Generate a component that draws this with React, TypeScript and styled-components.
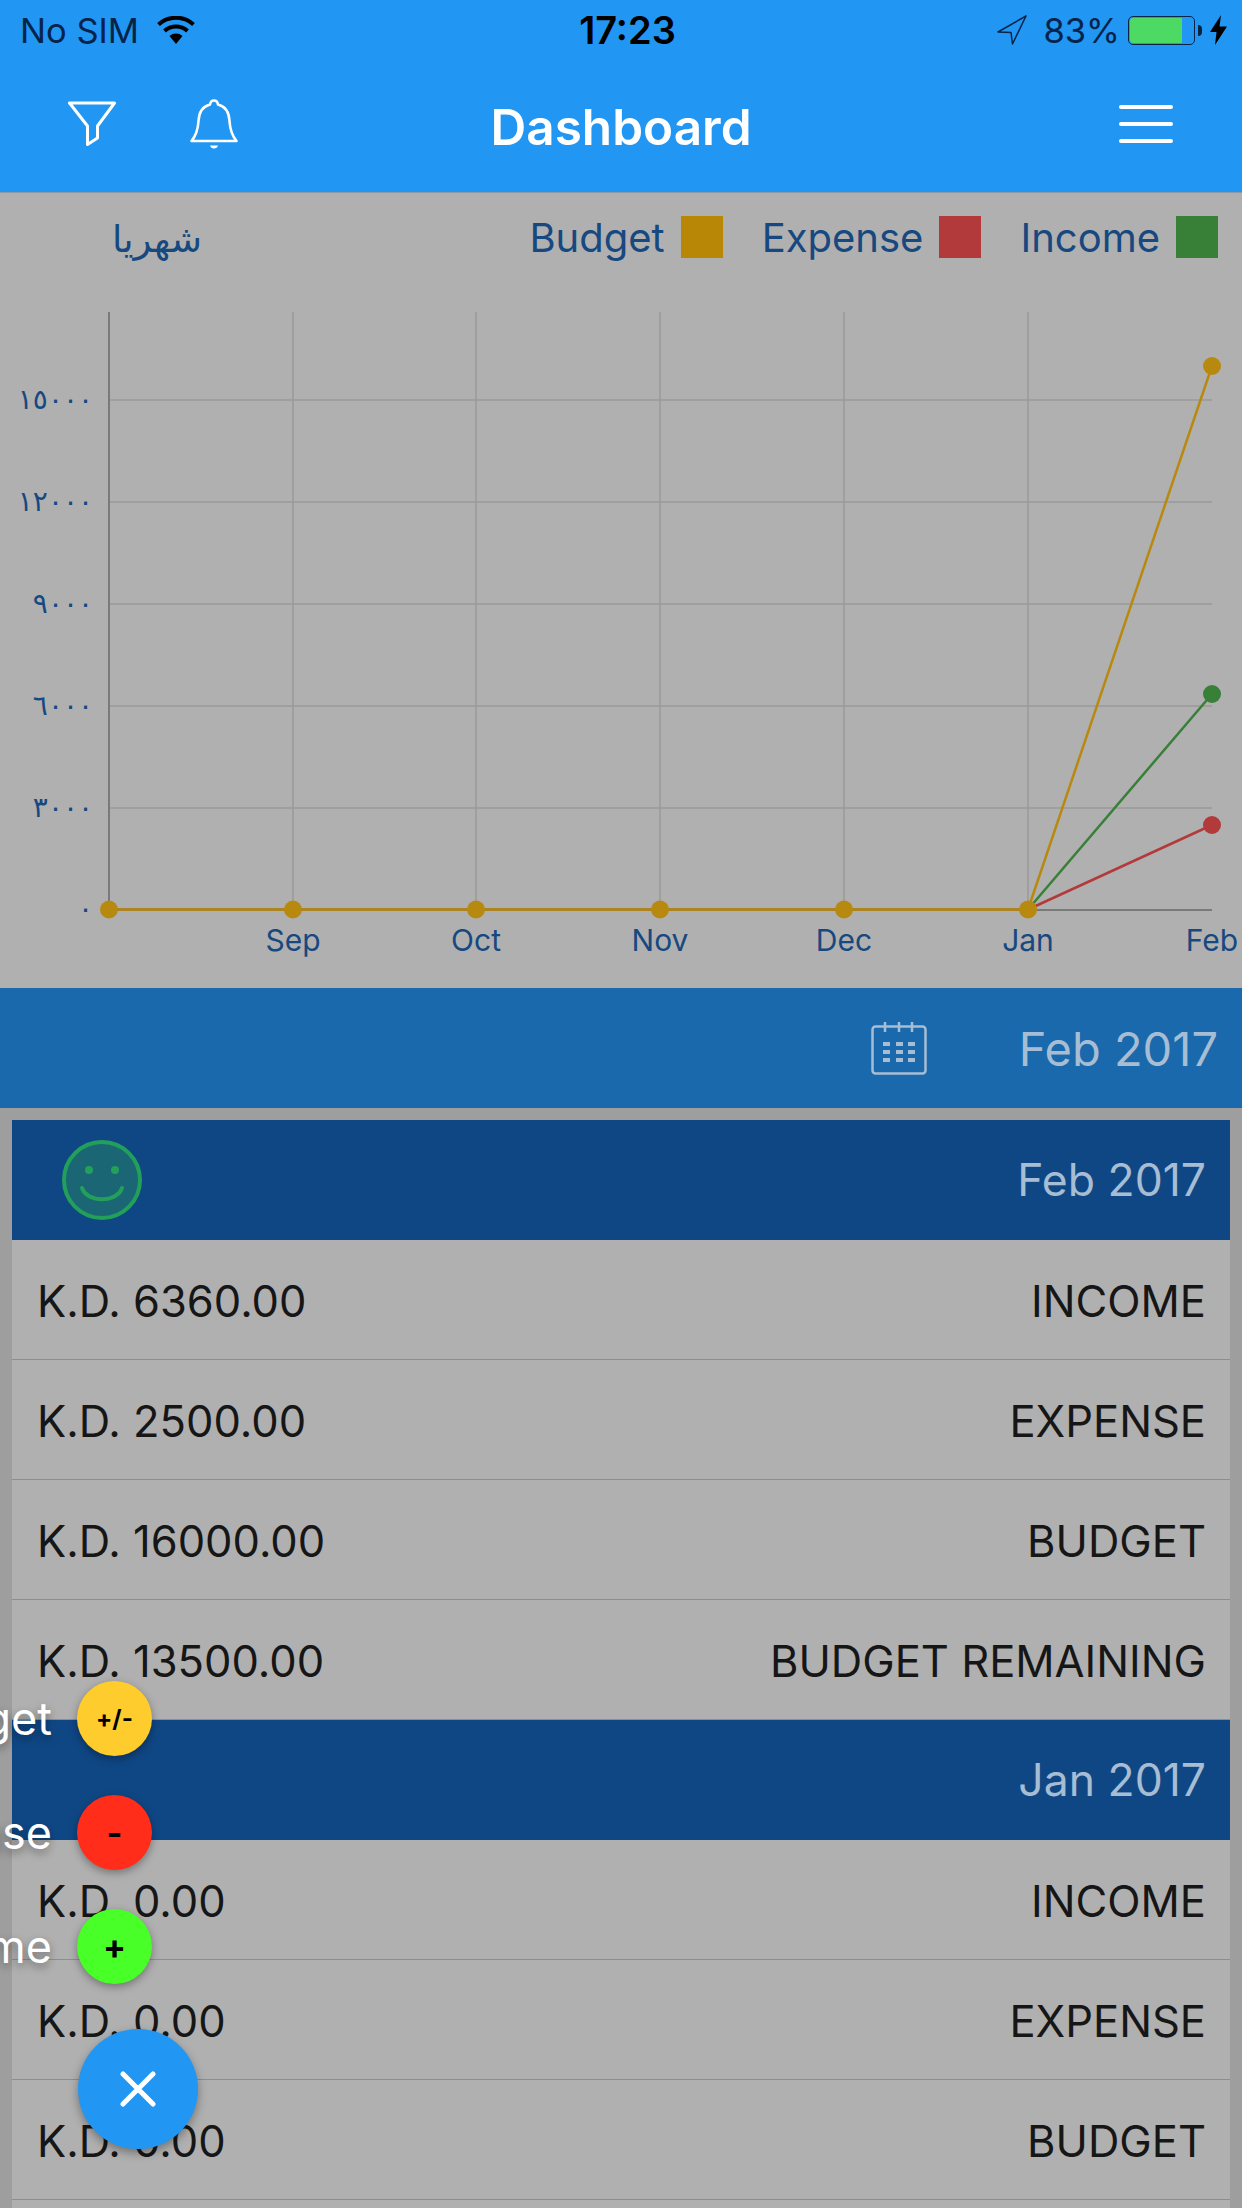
import { FunctionComponent } from 'react';
import styled, { createGlobalStyle } from 'styled-components';

const SANS = `Inter, 'Liberation Sans', sans-serif`;

const GlobalStyle = createGlobalStyle`
  html, body {
    margin: 0;
    padding: 0;
    background: #b0b0b0;
  }
  * {
    box-sizing: border-box;
  }
`;

const MONTHS = [
  { label: '', x: 109 },
  { label: 'Sep', x: 293 },
  { label: 'Oct', x: 476 },
  { label: 'Nov', x: 660 },
  { label: 'Dec', x: 844 },
  { label: 'Jan', x: 1028 },
  { label: 'Feb', x: 1212 },
];

const TICKS = [
  { label: '١٥٠٠٠', y: 400 },
  { label: '١٢٠٠٠', y: 502 },
  { label: '٩٠٠٠', y: 604 },
  { label: '٦٠٠٠', y: 706 },
  { label: '٣٠٠٠', y: 808 },
  { label: '٠', y: 909 },
];

const SERIES = [
  { color: '#b33a3a', y: 825 },
  { color: '#388038', y: 694 },
  { color: '#b8890f', y: 366 },
];

const FilterIcon = () => (
  <svg width="48" height="46" viewBox="0 0 48 46" fill="none" stroke="#fff" strokeWidth="3" strokeLinejoin="round">
    <path d="M1.5 2h45L29.5 25v12l-10 6.500V25z" />
  </svg>
);

const BellIcon = () => (
  <svg width="48" height="50" viewBox="0 0 48 50" fill="none" stroke="#fff" strokeWidth="2.600" strokeLinejoin="round">
    <path d="M1.500 42c5-6 6.500-12 7-20C9 12 14 7 20 5.500 20.500 2 22 1.500 24 1.500S27.500 2 28 5.500C34 7 39 12 39.500 22c.5 8 2 14 7 20z" />
    <path d="M20 46.500h8c-.5 2-2 3-4 3s-3.500-1-4-3z" fill="#fff" stroke="none" />
  </svg>
);

const WifiIcon = () => (
  <svg width="38" height="28" viewBox="0 0 38 28">
    <path d="M19 28l-6.500-8a10 10 0 0 1 13 0z" fill="#000" />
    <path d="M7.500 15a17 17 0 0 1 23 0M1.500 8.500a26 26 0 0 1 35 0" fill="none" stroke="#000" strokeWidth="4" />
  </svg>
);

const LocationIcon = () => (
  <svg width="30" height="30" viewBox="0 0 30 30" fill="none" stroke="#06234a" strokeWidth="1.500" strokeLinejoin="round">
    <path d="M29 1L1 17l13 .5L15.500 29z" />
  </svg>
);

const BoltIcon = () => (
  <svg width="17" height="30" viewBox="0 0 17 30">
    <path d="M11 0L0 17h6.500L5 30l12-18.500H9.500z" fill="#000" />
  </svg>
);

const CalendarIcon = () => (
  <svg width="56" height="54" viewBox="0 0 56 54" fill="none" stroke="#a6bdd3" strokeWidth="2.500">
    <rect x="1.500" y="5.500" width="53" height="47" rx="3" />
    <path d="M14 1v10M28 1v10M41 1v10" />
    <path
      d="M12 21h7v4h-7zM25 21h7v4h-7zM37 21h7v4h-7zM12 29h7v4h-7zM25 29h7v4h-7zM37 29h7v4h-7zM12 37h7v4h-7zM25 37h7v4h-7zM37 37h7v4h-7z"
      fill="#a6bdd3"
      stroke="none"
    />
  </svg>
);

const SmileyIcon = () => (
  <svg width="80" height="80" viewBox="0 0 80 80">
    <circle cx="40" cy="40" r="38" fill="#1a6674" stroke="#22a05a" strokeWidth="4" />
    <circle cx="27" cy="30" r="4" fill="#22a05a" />
    <circle cx="53" cy="30" r="4" fill="#22a05a" />
    <path d="M20 48c5 15 35 15 40 0" fill="none" stroke="#22a05a" strokeWidth="4" strokeLinecap="round" />
  </svg>
);

const Chart = () => (
  <ChartSvg viewBox="0 303 1242 685">
    {MONTHS.slice(1, 6).map((m) => (
      <line key={m.x} x1={m.x} x2={m.x} y1={312} y2={909} stroke="#9a9a9a" strokeWidth="1.500" />
    ))}
    {TICKS.slice(0, 5).map((t) => (
      <line key={t.y} x1={109} x2={1212} y1={t.y} y2={t.y} stroke="#9a9a9a" strokeWidth="1.500" />
    ))}
    <line x1={109} x2={109} y1={312} y2={909} stroke="#7a7a7a" strokeWidth="2" />
    <line x1={109} x2={1212} y1={910} y2={910} stroke="#7a7a7a" strokeWidth="2" />
    {TICKS.map((t) => (
      <YLabel key={t.y} x={93} y={t.y + 9}>
        {t.label}
      </YLabel>
    ))}
    {MONTHS.filter((m) => m.label).map((m) => (
      <XLabel key={m.x} x={m.x} y={951}>
        {m.label}
      </XLabel>
    ))}
    {SERIES.map((s) => (
      <g key={s.color}>
        <line x1={1028} y1={909.5} x2={1212} y2={s.y} stroke={s.color} strokeWidth="2.500" />
        <circle cx={1212} cy={s.y} r={9} fill={s.color} />
      </g>
    ))}
    <line x1={109} x2={1028} y1={909.5} y2={909.5} stroke="#ad8423" strokeWidth="3" />
    {MONTHS.slice(0, 6).map((m) => (
      <circle key={m.x} cx={m.x} cy={909.5} r={9} fill="#b8890f" />
    ))}
  </ChartSvg>
);

const ROW_GROUPS = [
  {
    month: 'Feb 2017',
    smiley: true,
    rows: [
      ['K.D. 6360.00', 'INCOME'],
      ['K.D. 2500.00', 'EXPENSE'],
      ['K.D. 16000.00', 'BUDGET'],
      ['K.D. 13500.00', 'BUDGET REMAINING'],
    ],
  },
  {
    month: 'Jan 2017',
    smiley: false,
    rows: [
      ['K.D. 0.00', 'INCOME'],
      ['K.D. 0.00', 'EXPENSE'],
      ['K.D. 0.00', 'BUDGET'],
    ],
  },
];

const FABS = [
  { label: 'Budget', sign: '+/-', color: '#ffcc2e', size: 24 },
  { label: 'Expense', sign: '-', color: '#ff2d1a', size: 34 },
  { label: 'Income', sign: '+', color: '#48ff28', size: 34 },
];

export const App: FunctionComponent = () => {
  return (
    <Page>
      <GlobalStyle />
      <TopBar>
        <StatusBar>
          <StatusSide>
            <StatusText>No SIM</StatusText>
            <WifiIcon />
          </StatusSide>
          <StatusTime>17:23</StatusTime>
          <StatusRight>
            <LocationIcon />
            <StatusText>83%</StatusText>
            <Battery>
              <BatteryFill />
            </Battery>
            <BoltIcon />
          </StatusRight>
        </StatusBar>
        <NavBar>
          <NavIcons>
            <FilterIcon />
            <BellIcon />
          </NavIcons>
          <Title>Dashboard</Title>
          <Hamburger>
            <HamburgerLine />
            <HamburgerLine />
            <HamburgerLine />
          </Hamburger>
        </NavBar>
      </TopBar>

      <ChartPanel>
        <LegendRow>
          <PeriodLabel>شهريا</PeriodLabel>
          <Legend>
            <LegendItem>
              Budget <Swatch $color="#b78705" />
            </LegendItem>
            <LegendItem>
              Expense <Swatch $color="#b33a3a" />
            </LegendItem>
            <LegendItem>
              Income <Swatch $color="#388038" />
            </LegendItem>
          </Legend>
        </LegendRow>
        <Chart />
      </ChartPanel>

      <DateBar>
        <CalendarIcon />
        <DateText>Feb 2017</DateText>
      </DateBar>

      <Report>
        {ROW_GROUPS.map((group) => (
          <div key={group.month}>
            <MonthRow>
              {group.smiley ? <SmileyIcon /> : <span />}
              <MonthText>{group.month}</MonthText>
            </MonthRow>
            {group.rows.map(([amount, label]) => (
              <DataRow key={label}>
                <span>{amount}</span>
                <span>{label}</span>
              </DataRow>
            ))}
          </div>
        ))}
        <DataRow />
      </Report>

      <FabMenu>
        {FABS.map((fab) => (
          <FabItem key={fab.label}>
            <FabLabel>{fab.label}</FabLabel>
            <MiniFab $color={fab.color} $size={fab.size}>
              {fab.sign}
            </MiniFab>
          </FabItem>
        ))}
        <MainFab>
          <svg width="36" height="36" viewBox="0 0 36 36" stroke="#fff" strokeWidth="5" strokeLinecap="round">
            <path d="M3 3l30 30M33 3L3 33" />
          </svg>
        </MainFab>
      </FabMenu>
    </Page>
  );
};

export default App;

const Page = styled.div`
  position: relative;
  width: 1242px;
  height: 2208px;
  overflow: hidden;
  background: #b0b0b0;
  font-family: ${SANS};
`;
const TopBar = styled.header`
  height: 193px;
  background: #2196f3;
  border-bottom: 1px solid #8d9aa5;
`;
const StatusBar = styled.div`
  display: grid;
  grid-template-columns: 1fr auto 1fr;
  align-items: center;
  height: 60px;
  padding: 0 15px 0 20px;
`;
const StatusSide = styled.div`
  display: flex;
  align-items: center;
  gap: 18px;
`;
const StatusRight = styled(StatusSide)`
  justify-content: flex-end;
  gap: 8px;
  svg:first-child {
    margin-right: 8px;
  }
`;
const StatusText = styled.span`
  font-size: 34.500px;
  color: #06234a;
`;
const StatusTime = styled.span`
  margin-left: 8px;
  font-size: 38px;
  font-weight: 600;
  color: #000;
`;
const Battery = styled.div`
  position: relative;
  width: 67px;
  height: 29px;
  padding: 1px;
  border: 1.5px solid #06234a;
  border-radius: 5px;
  margin-right: 7px;
  &::after {
    content: '';
    position: absolute;
    right: -8px;
    top: 8px;
    width: 4px;
    height: 11px;
    border-radius: 0 4px 4px 0;
    background: #06234a;
  }
`;
const BatteryFill = styled.div`
  width: 83%;
  height: 100%;
  background: #4cd964;
  border-radius: 3px 0 0 3px;
`;
const NavBar = styled.nav`
  display: flex;
  align-items: center;
  justify-content: space-between;
  height: 132px;
  padding: 0 69px 5px 68px;
  position: relative;
`;
const NavIcons = styled.div`
  display: flex;
  align-items: center;
  gap: 74px;
`;
const Title = styled.h1`
  position: absolute;
  left: 0;
  right: 0;
  top: 38px;
  margin: 0;
  text-align: center;
  font-size: 49.500px;
  line-height: 58px;
  font-weight: 600;
  color: #fff;
`;
const Hamburger = styled.div`
  display: flex;
  flex-direction: column;
  gap: 13px;
  width: 54px;
`;
const HamburgerLine = styled.div`
  height: 4px;
  border-radius: 2px;
  background: #fff;
`;
const ChartPanel = styled.section`
  height: 795px;
  background: #b0b0b0;
`;
const LegendRow = styled.div`
  display: flex;
  justify-content: space-between;
  height: 110px;
  padding: 23px 24px 0 112px;
`;
const PeriodLabel = styled.span`
  font-family: 'DejaVu Sans', sans-serif;
  font-size: 37px;
  line-height: 42px;
  margin-top: 3px;
  color: #17487f;
`;
const Legend = styled.div`
  display: flex;
  gap: 39px;
`;
const LegendItem = styled.div`
  display: flex;
  gap: 16px;
  font-size: 40px;
  line-height: 44px;
  color: #17487f;
`;
const Swatch = styled.span<{ $color: string }>`
  width: 42px;
  height: 42px;
  background: ${(p) => p.$color};
`;
const ChartSvg = styled.svg`
  display: block;
  width: 1242px;
  height: 685px;
`;
const YLabel = styled.text`
  font-family: 'DejaVu Sans', sans-serif;
  font-size: 28px;
  fill: #17487f;
  text-anchor: end;
`;
const XLabel = styled.text`
  font-family: ${SANS};
  font-size: 30px;
  fill: #17487f;
  text-anchor: middle;
`;
const DateBar = styled.div`
  display: flex;
  align-items: center;
  justify-content: flex-end;
  gap: 92px;
  height: 120px;
  padding-right: 24px;
  background: #1a69ac;
`;
const DateText = styled.span`
  font-size: 47px;
  color: #a6bdd3;
`;
const Report = styled.section`
  padding: 12px 12px 0;
  background: #9e9e9e;
`;
const MonthRow = styled.div`
  display: flex;
  align-items: center;
  justify-content: space-between;
  height: 120px;
  padding: 0 24px 0 50px;
  background: #0f4785;
`;
const MonthText = styled.span`
  font-size: 44.500px;
  color: #a6bdd3;
`;
const DataRow = styled.div`
  display: flex;
  align-items: center;
  justify-content: space-between;
  height: 120px;
  padding: 2px 24px 0 25px;
  background: #b0b0b0;
  border-bottom: 1px solid #8e8e8e;
  font-size: 43.500px;
  color: #161616;
`;
const FabMenu = styled.div`
  position: absolute;
  left: 0;
  top: 1681px;
  display: flex;
  flex-direction: column;
  gap: 39px;
`;
const FabItem = styled.div`
  display: flex;
  align-items: center;
  justify-content: flex-end;
  gap: 25px;
  width: 152px;
`;
const FabLabel = styled.span`
  font-size: 45px;
  white-space: nowrap;
  color: #fff;
  text-shadow: 0 4px 8px rgba(0, 0, 0, 0.4);
`;
const MiniFab = styled.div<{ $color: string; $size: number }>`
  flex: none;
  display: flex;
  align-items: center;
  justify-content: center;
  width: 75px;
  height: 75px;
  border-radius: 50%;
  font-size: ${(p) => p.$size}px;
  font-weight: 700;
  color: #000;
  background: ${(p) => p.$color};
  box-shadow: 0 3px 8px rgba(0, 0, 0, 0.35);
`;
const MainFab = styled.div`
  display: flex;
  align-items: center;
  justify-content: center;
  width: 120px;
  height: 120px;
  margin: 6px 0 0 78px;
  border-radius: 50%;
  background: #2196f3;
  box-shadow: 0 4px 10px rgba(0, 0, 0, 0.35);
`;
